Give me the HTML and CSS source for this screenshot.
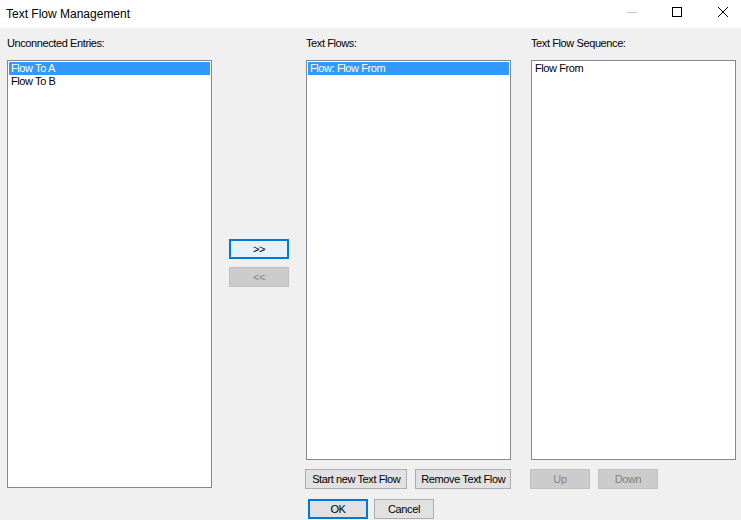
FILE: index.html
```html
<!DOCTYPE html>
<html lang="en">
<head>
  <meta charset="UTF-8" />
  <title>Text Flow Management</title>
  <link rel="stylesheet" href="styles.css">
</head>
<body>

  <div class="titlebar">
    <span class="title">Text Flow Management</span>
    <div class="win-controls">
      <svg class="win-min" width="10" height="10" viewBox="0 0 10 10"><path d="M0 5.5h10" stroke="#c8c8c8" stroke-width="1"/></svg>
      <svg width="10" height="10" viewBox="0 0 10 10"><rect x="0.5" y="0.5" width="9" height="9" fill="none" stroke="#000" stroke-width="1"/></svg>
      <svg width="10" height="10" viewBox="0 0 10 10"><path d="M0 0L10 10M10 0L0 10" stroke="#000" stroke-width="1"/></svg>
    </div>
  </div>

  <div class="dialog">
    <div class="col col-entries">
      <label class="caption">Unconnected Entries:</label>
      <ul class="listbox tall">
        <li class="selected">Flow To A</li>
        <li>Flow To B</li>
      </ul>
    </div>

    <div class="col col-move">
      <button class="btn focused">&gt;&gt;</button>
      <button class="btn" disabled>&lt;&lt;</button>
    </div>

    <div class="col col-flows">
      <label class="caption">Text Flows:</label>
      <ul class="listbox">
        <li class="selected">Flow: Flow From</li>
      </ul>
      <div class="btn-row">
        <button class="btn wide-start">Start new Text Flow</button>
        <button class="btn wide-remove">Remove Text Flow</button>
      </div>
      <div class="btn-row ok-row">
        <button class="btn focused">OK</button>
        <button class="btn">Cancel</button>
      </div>
    </div>

    <div class="col col-seq">
      <label class="caption">Text Flow Sequence:</label>
      <ul class="listbox">
        <li>Flow From</li>
      </ul>
      <div class="btn-row seq-row">
        <button class="btn" disabled>Up</button>
        <button class="btn" disabled>Down</button>
      </div>
    </div>
  </div>

</body>
</html>
```

FILE: styles.css
```css
:root {
  --face: #f0f0f0;
  --border: #828790;
  --select: #3399ff;
  --btn-bg: #e1e1e1;
  --btn-border: #adadad;
  --focus: #0078d7;
}
* { box-sizing: border-box; }
html, body {
  margin: 0;
  width: 741px;
  height: 520px;
  overflow: hidden;
}
body {
  background: var(--face);
  color: #000;
  font-family: 'Liberation Sans', Arial, sans-serif;
  font-size: 11px;
  letter-spacing: -0.4px;
}
.titlebar {
  height: 28px;
  background: #fff;
  display: flex;
  align-items: center;
  justify-content: space-between;
  padding: 0 13px 0 6px;
  letter-spacing: 0;
}
.title {
  font-size: 12px;
  margin-top: -1px;
}
.win-controls {
  display: flex;
  gap: 36px;
  align-items: center;
  margin-top: -4px;
}
.win-controls svg { display: block; }
.win-min { margin-right: -1px; }
.dialog {
  display: flex;
  padding: 9px 0 0 7px;
}
.col {
  display: flex;
  flex-direction: column;
  width: 205px;
}
.caption {
  height: 13px;
  line-height: 13px;
  margin-bottom: 10px;
}
.listbox {
  list-style: none;
  margin: 0;
  padding: 1px;
  height: 400px;
  background: #fff;
  border: 1px solid var(--border);
}
.listbox.tall { height: 428px; }
.listbox li {
  height: 13px;
  line-height: 13px;
  padding-left: 2px;
  white-space: nowrap;
}
.listbox li.selected {
  background: var(--select);
  color: #fff;
}
.col-move {
  width: 60px;
  margin: 0 17px;
  padding-top: 202px;
  gap: 8px;
}
.col-seq { margin-left: 20px; }
.btn {
  height: 20px;
  padding: 0;
  font-family: inherit;
  font-size: 11px;
  letter-spacing: inherit;
  color: #000;
  background: var(--btn-bg);
  border: 1px solid var(--btn-border);
}
.btn.focused {
  border: 2px solid var(--focus);
}
.col-move .btn.focused { background: #e5f1fb; }
.btn:disabled {
  background: #cccccc;
  border-color: #bfbfbf;
  color: #838383;
}
.btn-row {
  display: flex;
  gap: 8px;
  margin-top: 9px;
}
.btn-row .btn { width: 60px; }
.btn-row .wide-start { width: 103px; margin-left: -1px; }
.btn-row .wide-remove { width: 96px; }
.ok-row {
  margin-top: 10px;
  margin-left: 2px;
  gap: 6px;
}
.seq-row { margin-left: -1px; }
```
